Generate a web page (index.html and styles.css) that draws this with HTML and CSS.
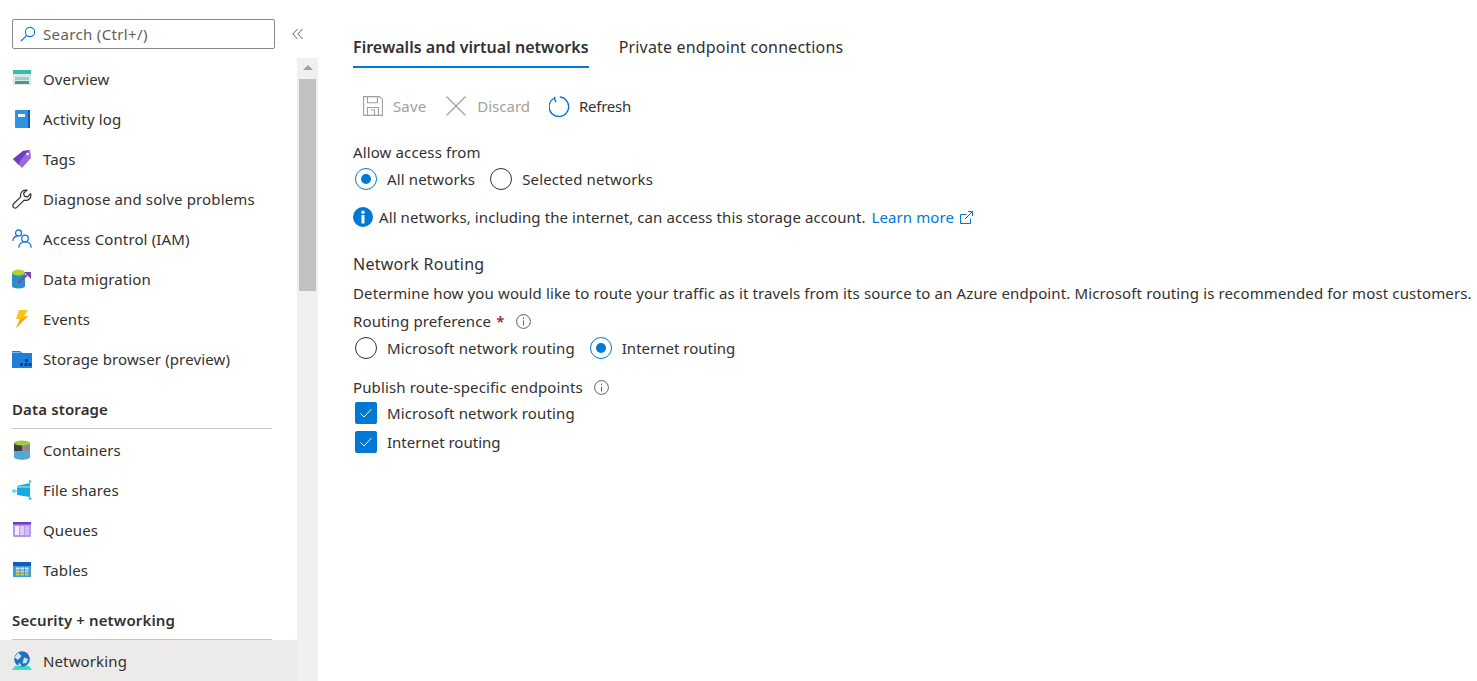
FILE: index.html
```html
<!DOCTYPE html>
<html lang="en">
<head>
    <meta charset="UTF-8">
    <meta name="viewport" content="width=device-width, initial-scale=1.0">
    <title>Networking</title>
    <link rel="stylesheet" href="styles.css">
</head>
<body>
    <div class="sidebar">
        <div class="search-row">
            <div class="search-box">
                <svg class="search-icon" width="16" height="16" viewBox="0 0 16 16"><circle cx="10" cy="6" r="4.6" fill="none" stroke="#0078d4" stroke-width="1.1"/><path d="M6.7 9.3 1 15" stroke="#0078d4" stroke-width="1.2" fill="none"/></svg>
                <span>Search (Ctrl+/)</span>
            </div>
            <svg class="collapse" width="12" height="12" viewBox="0 0 12 12"><path d="M5.5 1 .8 6l4.7 5M10.5 1 5.800 6l4.700 5" fill="none" stroke="#605e5c" stroke-width="1"/></svg>
        </div>
        <div class="nav-wrap">
            <nav class="nav">
                <a class="nav-item">
                    <svg width="20" height="20" viewBox="0 0 20 20"><rect x="1" y="1" width="18" height="15" fill="#e4e4e4"/><rect x="1" y="1" width="18" height="4" fill="#32bfb0"/><rect x="3" y="8" width="14" height="3" fill="#8fd6cc"/><rect x="3" y="12" width="14" height="3" fill="#3a9d8e"/></svg>
                    <span>Overview</span>
                </a>
                <a class="nav-item">
                    <svg width="20" height="20" viewBox="0 0 20 20"><rect x="3" y="1" width="15" height="18" rx="1" fill="#2f92e4"/><rect x="16" y="1" width="2" height="18" fill="#0f5fa8"/><rect x="6" y="5" width="7" height="3" fill="#fff"/></svg>
                    <span>Activity log</span>
                </a>
                <a class="nav-item">
                    <svg width="20" height="20" viewBox="0 0 20 20"><path d="M1 10 11 2l7-1 1 8-9 10z" fill="#9a6bd8"/><path d="M1 10 11 2l6-1-9 11-1 4z" fill="#6f3cc4"/><circle cx="15.500" cy="5" r="1.300" fill="#fff"/></svg>
                    <span>Tags</span>
                </a>
                <a class="nav-item">
                    <svg width="20" height="20" viewBox="0 0 20 20"><path d="M13.500 1.200a5 5 0 0 0-4.700 6.500L1.500 15a2.300 2.300 0 0 0 3.300 3.300l7.300-7.200a5 5 0 0 0 6.500-6.300l-3.300 3.200-2.900-.8-.8-2.900 3.200-3.100a5 5 0 0 0-1.300-.2z" fill="none" stroke="#323130" stroke-width="1.200"/></svg>
                    <span>Diagnose and solve problems</span>
                </a>
                <a class="nav-item">
                    <svg width="20" height="20" viewBox="0 0 20 20" fill="none" stroke="#1a73d9" stroke-width="1.300"><circle cx="6.500" cy="4" r="3"/><circle cx="13" cy="9.500" r="3.300"/><path d="M.8 12c.4-3 2-4.500 4-4.500M6.800 18.800c.2-3.800 2.800-6 6.200-6s6 2.200 6.200 6"/></svg>
                    <span>Access Control (IAM)</span>
                </a>
                <a class="nav-item">
                    <svg width="20" height="20" viewBox="0 0 20 20"><path d="M0 3v14c0 1.500 3 2.500 6.500 2.500S13 18.500 13 17V3z" fill="#2b8fc4"/><ellipse cx="6.500" cy="3.500" rx="6.500" ry="3" fill="#b5d334"/><path d="m6 14 9-8" stroke="#7b4aa8" stroke-width="2"/><path d="M12 3h7v7z" fill="#7b4aa8"/></svg>
                    <span>Data migration</span>
                </a>
                <a class="nav-item">
                    <svg width="20" height="20" viewBox="0 0 20 20"><path d="M7 1h9l-4 6h4L4 19l4-9H4z" fill="#fcc419"/><path d="M16 7 4 19l4-9z" fill="#f7a614"/></svg>
                    <span>Events</span>
                </a>
                <a class="nav-item">
                    <svg width="20" height="20" viewBox="0 0 20 20"><path d="M0 2h8l2 2h10v15H0z" fill="#1e7fdc"/><rect x="0" y="3" width="8" height="1" fill="#7cc0f0"/><path d="M13 10h3v3h-3zM8 14h3v3H8zM12.500 14h3v3h-3zM16.500 14h3v3h-3z" fill="#0b3f7d"/></svg>
                    <span>Storage browser (preview)</span>
                </a>

                <div class="nav-heading">Data storage</div>
                <a class="nav-item">
                    <svg width="20" height="20" viewBox="0 0 20 20"><path d="M2 3v14c0 1.300 3.500 2.500 8 2.500s8-1.200 8-2.500V3z" fill="#8a8a8a"/><path d="M2 3h8v8H2z" fill="#3f3f3f"/><path d="M2 11h16v6c0 1.300-3.500 2.500-8 2.500S2 18.300 2 17z" fill="#55a8d6"/><ellipse cx="10" cy="3" rx="8" ry="2.600" fill="#a4c93a"/></svg>
                    <span>Containers</span>
                </a>
                <a class="nav-item">
                    <svg width="20" height="20" viewBox="0 0 20 20"><path d="M5 6 18 3v14L5 15z" fill="#1aa9dc"/><path d="M5 6h13v2H5z" fill="#5fd1ee"/><path d="M1 11h5" stroke="#37c7ee"/><circle cx="2" cy="11" r="2" fill="#5be0f5"/><circle cx="18" cy="1.500" r="1.300" fill="#37c7ee"/><circle cx="18" cy="18.500" r="1.500" fill="#37c7ee"/></svg>
                    <span>File shares</span>
                </a>
                <a class="nav-item">
                    <svg width="20" height="20" viewBox="0 0 20 20"><rect x="1" y="2" width="18" height="15" rx="1" fill="#b796f0"/><rect x="1" y="2" width="18" height="2.500" fill="#6e3fc4"/><rect x="3" y="6" width="4" height="9" fill="#f3eefc"/><rect x="8" y="6" width="4" height="9" fill="#dccdf6"/><rect x="13" y="6" width="4" height="9" fill="#d0bdf3"/></svg>
                    <span>Queues</span>
                </a>
                <a class="nav-item">
                    <svg width="20" height="20" viewBox="0 0 20 20"><rect x="1" y="2" width="18" height="15" fill="#3b9be8"/><rect x="1" y="2" width="18" height="4" fill="#0f5fb5"/><path d="M4 7.500h3.500v2H4zM8.500 7.500H12v2H8.500zM13 7.500h3.500v2H13z" fill="#dbeafb"/><path d="M4 10.500h3.500v2H4zM8.500 10.500H12v2H8.500zM13 10.500h3.500v2H13z" fill="#f5d547"/><path d="M4 13.500h3.500v2H4zM8.500 13.500H12v2H8.500zM13 13.500h3.500v2H13z" fill="#f0c419"/></svg>
                    <span>Tables</span>
                </a>

                <div class="nav-heading second">Security + networking</div>
                <a class="nav-item active">
                    <svg width="20" height="20" viewBox="0 0 20 20"><path d="M3 15h14l3 4H0z" fill="#3fdcba"/><circle cx="10" cy="8" r="7.800" fill="#1f6fc4"/><path d="M6 1.500 9.500 5 6 9 2.500 6.500zM12 6.500l4 1.500-1.500 4-4 .5zM7 11.500l3 3.500H6z" fill="#cfe6f8"/></svg>
                    <span>Networking</span>
                </a>
            </nav>
            <div class="scrollbar">
                <div class="scroll-up"></div>
                <div class="scroll-thumb"></div>
            </div>
        </div>
    </div>

    <main class="content">
        <div class="tabs">
            <div class="tab active">Firewalls and virtual networks</div>
            <div class="tab">Private endpoint connections</div>
        </div>

        <div class="toolbar">
            <div class="tool disabled">
                <svg width="20" height="20" viewBox="0 0 20 20" fill="none" stroke="#a19f9d" stroke-width="1.100"><path d="M.6.600h16l2.800 2.800v16H.6z"/><path d="M4.500.800v6h10v-6M4.500 19v-7.500h11V19M8 14h3.500v5"/></svg>
                <span>Save</span>
            </div>
            <div class="tool disabled discard">
                <svg width="20" height="20" viewBox="0 0 20 20" fill="none" stroke="#a19f9d" stroke-width="1.200"><path d="m.5.500 19 19M19.500.500l-19 19"/></svg>
                <span>Discard</span>
            </div>
            <div class="tool refresh">
                <svg width="21" height="21" viewBox="0 0 20 20" fill="none" stroke="#0078d4" stroke-width="1.300"><path d="M5.300 1.900a9.300 9.300 0 1 0 5-.9"/><path d="M6 .8 5.200 2 6.500 6"/></svg>
                <span>Refresh</span>
            </div>
        </div>

        <div class="field-label">Allow access from</div>
        <div class="choices">
            <label class="choice"><span class="radio checked"></span>All networks</label>
            <label class="choice"><span class="radio"></span>Selected networks</label>
        </div>
        <div class="info-line">
            <svg width="20" height="20" viewBox="0 0 20 20"><circle cx="10" cy="10" r="10" fill="#0078d4"/><circle cx="10" cy="5.200" r="1.700" fill="#fff"/><rect x="8.500" y="8" width="3" height="8.500" fill="#fff"/></svg>
            <span>All networks, including the internet, can access this storage account.</span>
            <a class="link">Learn more
                <svg width="13" height="13" viewBox="0 0 13 13" fill="none" stroke="#0078d4"><path d="M10.500 7.500v5H.500v-9h6M5 8l7-7M8 .500h4.500V5"/></svg>
            </a>
        </div>

        <h2 class="section-title">Network Routing</h2>
        <p class="section-text">Determine how you would like to route your traffic as it travels from its source to an Azure endpoint. Microsoft routing is recommended for most customers.</p>
        <div class="field-label routing-label">Routing preference <span class="required">*</span>
            <svg class="hint" width="15" height="15" viewBox="0 0 15 15"><circle cx="7.500" cy="7.500" r="6.900" fill="none" stroke="#605e5c"/><path d="M7.500 6.500v5M7.500 3.500v1.500" stroke="#605e5c"/></svg>
        </div>
        <div class="choices">
            <label class="choice"><span class="radio"></span>Microsoft network routing</label>
            <label class="choice short"><span class="radio checked"></span>Internet routing</label>
        </div>
        <div class="field-label publish-label">Publish route-specific endpoints
            <svg class="hint" width="15" height="15" viewBox="0 0 15 15"><circle cx="7.500" cy="7.500" r="6.900" fill="none" stroke="#605e5c"/><path d="M7.500 6.500v5M7.500 3.500v1.500" stroke="#605e5c"/></svg>
        </div>
        <label class="check"><span class="checkbox"><svg width="14" height="14" viewBox="0 0 14 14"><path d="m1.500 7.500 3.500 3.500 7.500-8" fill="none" stroke="#fff"/></svg></span>Microsoft network routing</label>
        <label class="check short"><span class="checkbox"><svg width="14" height="14" viewBox="0 0 14 14"><path d="m1.500 7.500 3.500 3.500 7.500-8" fill="none" stroke="#fff"/></svg></span>Internet routing</label>
    </main>
</body>
</html>
```

FILE: styles.css
```css
* {
    box-sizing: border-box;
}

html, body {
    height: 100%;
    overflow: hidden;
}

body {
    display: flex;
    margin: 0;
    font-family: "Noto Sans", "Open Sans", sans-serif;
    font-size: 15px;
    letter-spacing: 0.13px;
    color: #323130;
    background-color: #fff;
}

.sidebar {
    display: flex;
    flex-direction: column;
    flex: none;
    width: 318px;
    height: 681px;
}

.search-row {
    display: flex;
    align-items: center;
    height: 58px;
    padding: 10px 0 0 12px;
}

.search-box {
    display: flex;
    align-items: center;
    gap: 7px;
    width: 263px;
    height: 30px;
    padding-left: 7px;
    border: 1px solid #8a8886;
    border-radius: 2px;
    color: #605e5c;
    letter-spacing: 0.35px;
}

.collapse {
    margin-left: 17px;
}

.nav-wrap {
    display: flex;
    flex: 1;
    min-height: 0;
}

.nav {
    flex: none;
    width: 297px;
    padding-top: 1px;
}

.nav-item {
    display: flex;
    align-items: center;
    gap: 11px;
    height: 40px;
    padding-left: 12px;
}

.nav-item svg {
    flex: none;
}

.nav-item.active {
    height: 41px;
    background: #edebe9;
}

.nav-heading {
    height: 29px;
    margin: 21px 25px 1px 12px;
    border-bottom: 1px solid #c8c6c4;
    font-weight: 600;
    line-height: 18px;
}

.nav-heading.second {
    height: 30px;
    margin-top: 20px;
    margin-bottom: 0;
    line-height: 20px;
}

.scrollbar {
    flex: none;
    width: 21px;
    background: #f0f0f0;
}

.scroll-up {
    height: 21px;
    position: relative;
}

.scroll-up::before {
    content: "";
    position: absolute;
    left: 6px;
    top: 7px;
    border-left: 5px solid transparent;
    border-right: 5px solid transparent;
    border-bottom: 5px solid #a0a0a0;
}

.scroll-thumb {
    width: 17px;
    height: 212px;
    margin-left: 2px;
    background: #c1c1c1;
}

.content {
    flex: 1;
    min-width: 0;
    padding: 28px 0 0 35px;
    white-space: nowrap;
}

.tabs {
    display: flex;
    gap: 30px;
    height: 40px;
    font-size: 16px;
    letter-spacing: 0.18px;
}

.tab {
    height: 40px;
    padding-top: 8px;
}

.tab.active {
    font-weight: 600;
    letter-spacing: 0.03px;
    border-bottom: 2px solid #0078d4;
}

.toolbar {
    display: flex;
    align-items: center;
    gap: 19px;
    height: 40px;
    margin: 18px 0 0 10px;
}

.tool {
    display: flex;
    align-items: center;
    gap: 10px;
}

.tool.disabled {
    color: #a19f9d;
}

.discard {
    gap: 11px;
    margin-left: 1px;
    letter-spacing: 0;
}

.refresh {
    gap: 9px;
    letter-spacing: -0.25px;
}

.field-label {
    height: 20px;
    margin-top: 16px;
}

.choices {
    display: flex;
    gap: 15px;
    height: 22px;
    margin: 6px 0 0 2px;
}

.choice {
    display: flex;
    align-items: center;
    gap: 10px;
}

.short {
    letter-spacing: 0;
}

.radio {
    position: relative;
    width: 22px;
    height: 22px;
    border: 1px solid #323130;
    border-radius: 50%;
}

.radio.checked {
    border-color: #0078d4;
}

.radio.checked::after {
    content: "";
    position: absolute;
    left: 5px;
    top: 5px;
    width: 10px;
    height: 10px;
    border-radius: 50%;
    background: #0078d4;
}

.info-line {
    display: flex;
    align-items: center;
    gap: 6px;
    height: 20px;
    margin-top: 17px;
    letter-spacing: 0.09px;
}

.link {
    display: flex;
    align-items: center;
    gap: 6px;
    color: #0078d4;
}

.section-title {
    margin: 26px 0 0;
    font-size: 16px;
    font-weight: 400;
    letter-spacing: 0.25px;
    line-height: 22px;
}

.section-text {
    margin: 8px 0 0;
    line-height: 20px;
}

.routing-label {
    margin-top: 8px;
}

.publish-label {
    margin-top: 18px;
}

.required {
    color: #a4262c;
    font-weight: 600;
    margin-left: 1px;
}

.hint {
    margin-left: 7px;
    vertical-align: -2px;
}

.check {
    display: flex;
    align-items: center;
    gap: 10px;
    height: 22px;
    margin: 5px 0 0 2px;
}

.check + .check {
    margin-top: 7px;
}

.checkbox {
    display: flex;
    align-items: center;
    justify-content: center;
    width: 22px;
    height: 22px;
    border-radius: 2px;
    background: #0078d4;
}
```
